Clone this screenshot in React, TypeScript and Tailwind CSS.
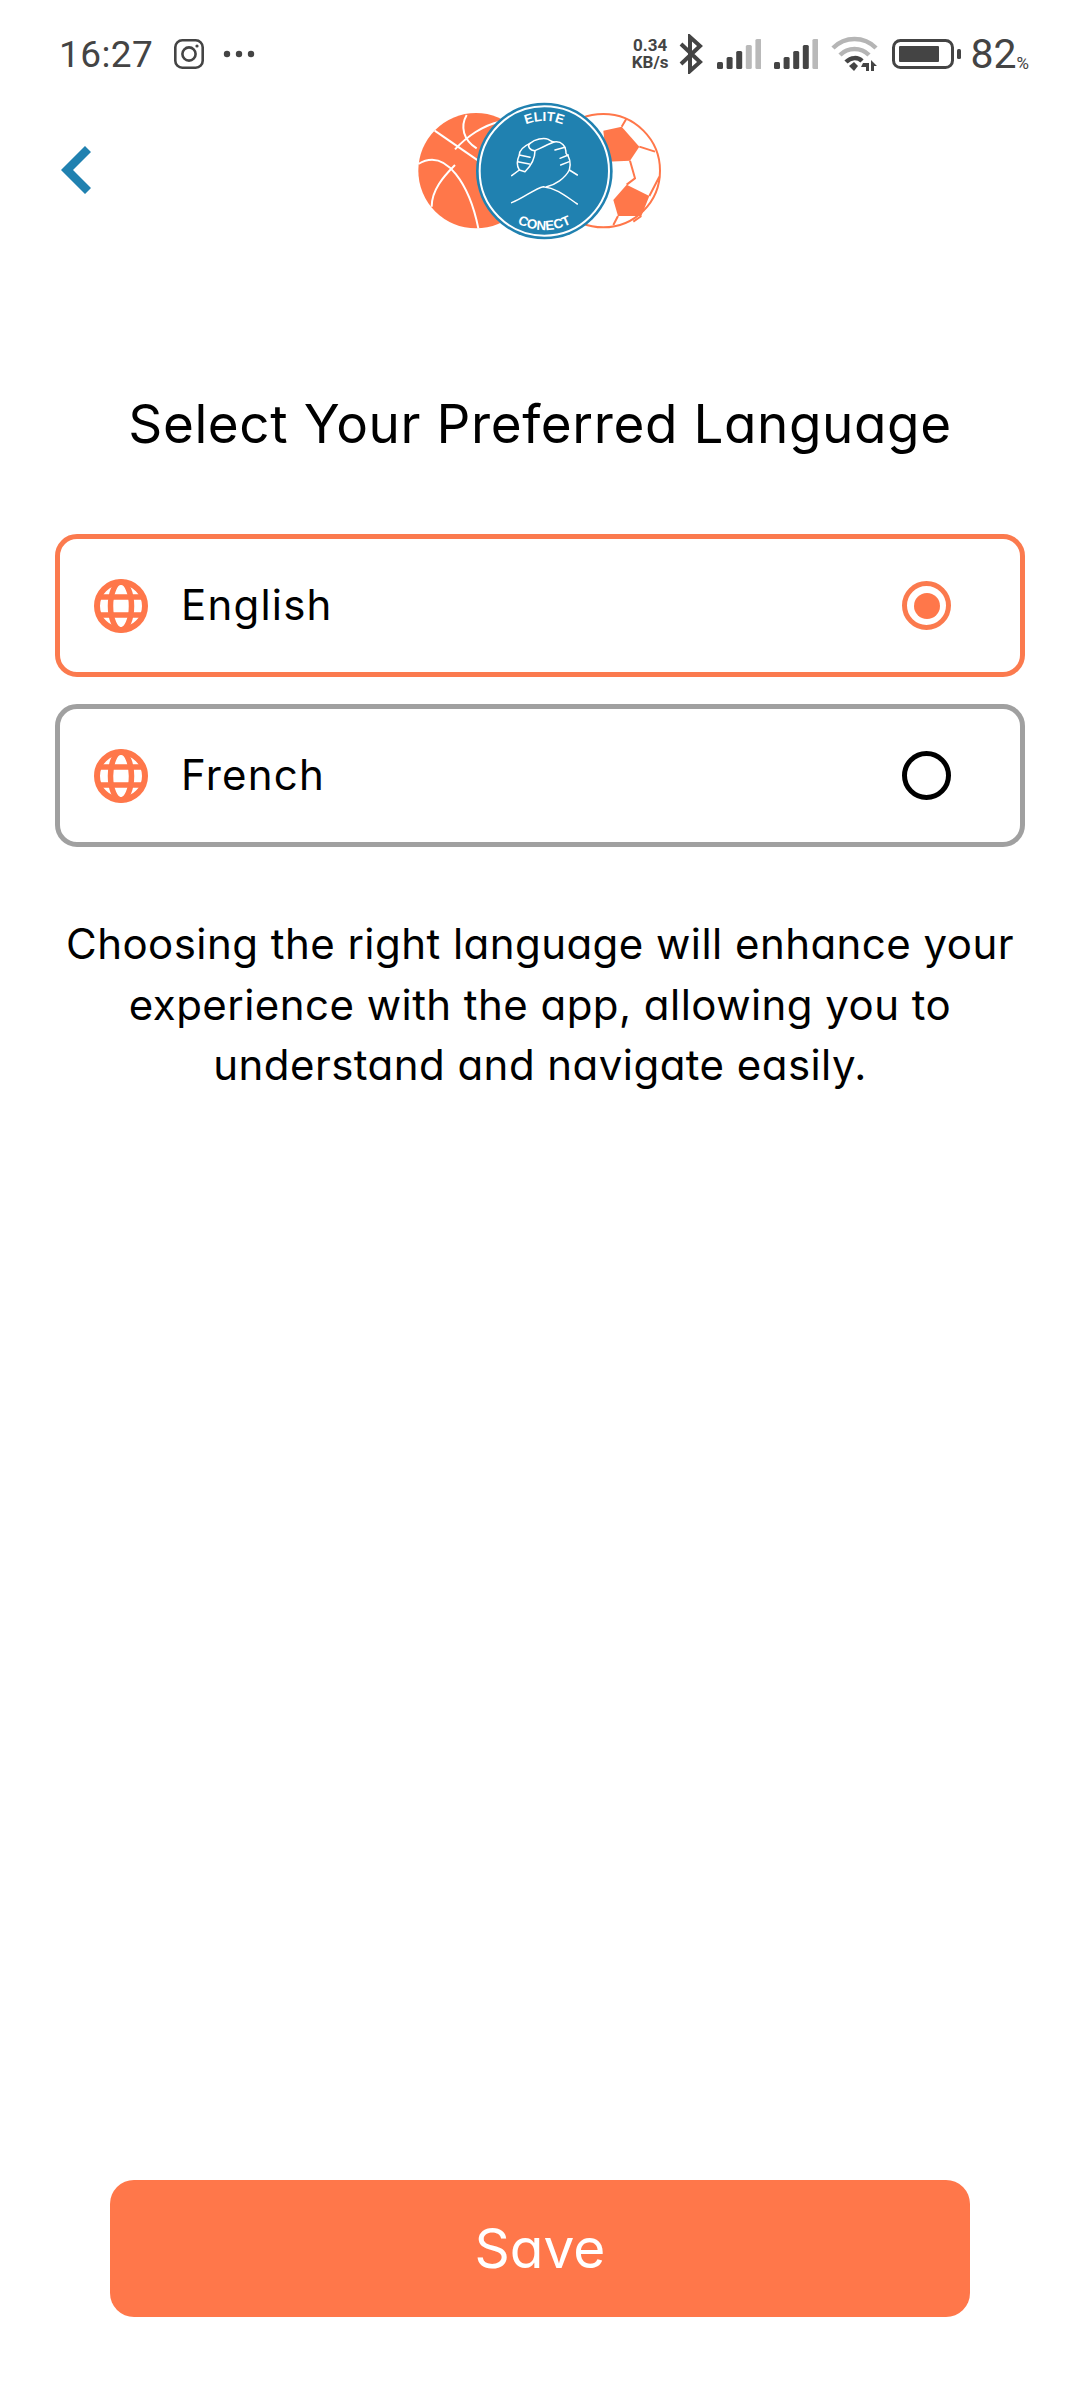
const ORANGE = "#ff774a";

// Fake system status bar icons
function StatusBar() {
  return (
    <div className="h-[90px] flex items-center pl-[59px] pr-[51px] pt-[18px] text-[#444444] font-['Roboto',sans-serif]">
      <span className="text-[37px] leading-none tracking-[0.4px]">16:27</span>
      <svg className="ml-[21px]" width="30" height="30" viewBox="0 0 30 30" fill="none" stroke="#444444" strokeWidth="2.6">
        <rect x="1.3" y="1.3" width="27.4" height="27.4" rx="7" />
        <circle cx="15" cy="15" r="6.6" />
        <circle cx="23" cy="7" r="1.6" fill="#444444" stroke="none" />
      </svg>
      <svg className="ml-[19px]" width="32" height="8" viewBox="0 0 32 8" fill="#444444">
        <circle cx="4" cy="4" r="3.2" />
        <circle cx="16" cy="4" r="3.2" />
        <circle cx="28" cy="4" r="3.2" />
      </svg>

      <div className="ml-auto flex items-center">
        <div className="flex flex-col items-center text-[17px] leading-[17px] font-bold">
          <span>0.34</span>
          <span>KB/s</span>
        </div>
        <svg className="ml-[10px]" width="26" height="40" viewBox="0 0 26 40" fill="none" stroke="#444444" strokeWidth="4">
          <path d="M3 10 L22 28 L12 37 V3 L22 12 L3 30" />
        </svg>
        <Signal bars={3} />
        <Signal bars={4} />
        <svg className="ml-[13px]" width="47" height="36" viewBox="0 0 47 36" fill="none">
          <path d="M2 12 C14 0 33 0 45 12" stroke="#b5b5b5" strokeWidth="4.5" />
          <path d="M9 19 C17 11 30 11 38 19" stroke="#b5b5b5" strokeWidth="4.5" />
          <path d="M15 26 C20 21 27 21 31 25" stroke="#444444" strokeWidth="4.5" />
          <path d="M18 30 L23 26 L27 30 L23 35 Z" fill="#444444" />
          <path d="M32 27 H38 V35 H35 V31 H30 Z M40 24 L46 30 H43 V35 H40 Z" fill="#444444" />
        </svg>
        <svg className="ml-[14px]" width="70" height="30" viewBox="0 0 70 30" fill="none">
          <rect x="1.5" y="1.5" width="59" height="27" rx="7" stroke="#444444" strokeWidth="3" />
          <rect x="7" y="7" width="40" height="16" rx="1" fill="#444444" />
          <rect x="65" y="10" width="4" height="10" rx="1.5" fill="#444444" />
        </svg>
        <span className="ml-[8px] text-[41px] leading-none">82</span>
        <span className="text-[17px] leading-none self-end mb-[3px]">%</span>
      </div>
    </div>
  );
}

function Signal({ bars }: { bars: number }) {
  return (
    <svg className="ml-[13px]" width="44" height="30" viewBox="0 0 44 30">
      {[0, 1, 2, 3, 4].map((i) => (
        <rect
          key={i}
          x={i * 9.6}
          y={[23, 18, 12, 6, 0][i]}
          width="6"
          height={[7, 12, 18, 24, 30][i]}
          rx="1.5"
          fill={i < bars ? "#444444" : "#b9b9b9"}
        />
      ))}
    </svg>
  );
}

function Logo() {
  return (
    <svg width="280" height="160" viewBox="0 0 840 480">
      {/* soccer ball */}
      <circle cx="610" cy="242" r="170" fill="#fff" stroke={ORANGE} strokeWidth="6" />
      <path d="M610 122 L665 110 L718 170 L690 212 L620 215 Z" fill={ORANGE} />
      <path d="M680 284 L748 318 L724 378 L654 378 L640 330 Z" fill={ORANGE} />
      <path d="M665 110 L680 85 M718 170 L765 185 M690 212 L705 265 L680 284 M748 318 L778 260 M654 378 L640 405 M724 378 L700 395" stroke={ORANGE} strokeWidth="6" fill="none" />

      {/* basketball */}
      <circle cx="228" cy="242" r="173" fill={ORANGE} />
      <g stroke="#fff" strokeWidth="6" fill="none">
        <path d="M104 122 L290 250" />
        <path d="M200 75 C180 110 190 150 230 175 M165 178 C200 140 250 105 300 95" />
        <path d="M55 222 C140 170 210 290 235 415" />
        <path d="M95 350 C95 300 130 260 165 225" />
      </g>

      {/* badge */}
      <circle cx="433" cy="243" r="205" fill="#2081b0" />
      <circle cx="433" cy="243" r="194" fill="none" stroke="#fff" strokeWidth="6" />
      <defs>
        <path id="logo-top" d="M283 243 A150 150 0 0 1 583 243" />
        <path id="logo-bottom" d="M256 243 A177 177 0 0 0 610 243" />
      </defs>
      <text fill="#fff" fontSize="40" fontWeight="600" fontFamily="'Liberation Sans', sans-serif" textAnchor="middle">
        <textPath href="#logo-top" startOffset="50%">ELITE</textPath>
      </text>
      <text fill="#fff" fontSize="40" fontWeight="600" fontFamily="'Liberation Sans', sans-serif" textAnchor="middle">
        <textPath href="#logo-bottom" startOffset="50%">CONECT</textPath>
      </text>

      {/* hands, traced from the badge */}
      <g transform="translate(240 90)" stroke="#fff" strokeWidth="4.5" fill="none" strokeLinecap="round" strokeLinejoin="round">
        <path d="M95 167 L118 150 C108 135 112 118 118 105 C118 92 128 80 150 70 C165 58 190 52 205 58 C212 62 215 65 222 66 C245 62 258 78 258 100 C272 115 272 135 268 150 C255 175 225 195 200 200" />
        <path d="M95 248 C130 235 165 205 190 200 C235 205 265 235 292 252" />
        <path d="M268 150 L292 165" />
        <path d="M150 70 C140 78 150 92 165 92 C180 85 200 75 222 66" />
        <path d="M165 92 C165 115 155 135 135 155 L118 150" />
        <path d="M118 105 L150 112 M113 125 L148 132" />
        <path d="M225 90 L255 82 M240 115 L265 105 M242 135 L268 125" />
      </g>
    </svg>
  );
}

function Globe() {
  return (
    <svg width="54" height="54" viewBox="0 0 54 54" fill="none" stroke={ORANGE} strokeWidth="5.5">
      <circle cx="27" cy="27" r="24" strokeWidth="6" />
      <ellipse cx="27" cy="27" rx="10.5" ry="24" />
      <path d="M4 18 H50 M4 36 H50" />
    </svg>
  );
}

function LanguageRow({ label, selected }: { label: string; selected: boolean }) {
  return (
    <div
      className={
        "h-[143px] flex items-center rounded-[22px] border-[5px] pl-[34px] pr-[69px] " +
        (selected ? "border-[#fb7a4e]" : "border-[#a0a0a0]")
      }
    >
      <Globe />
      <span className="ml-[33px] mb-[2px] text-[42px] leading-none tracking-[1.2px] text-black">{label}</span>
      {selected ? (
        <div className="ml-auto w-[49px] h-[49px] rounded-full border-[5px] border-[#fb7a4e] flex items-center justify-center">
          <div className="w-[26px] h-[26px] rounded-full bg-[#ff774a]" />
        </div>
      ) : (
        <div className="ml-auto w-[49px] h-[49px] rounded-full border-[5px] border-black" />
      )}
    </div>
  );
}

export default function App() {
  return (
    <div className="w-[1080px] h-[2400px] bg-white flex flex-col font-['Inter',sans-serif] [font-feature-settings:'cv11']">
      <StatusBar />

      <div className="h-[160px] grid grid-cols-[400px_280px_400px] items-center">
        <svg className="ml-[61px]" width="30" height="48" viewBox="0 0 30 48" fill="none" stroke="#2081b0" strokeWidth="8.5">
          <path d="M27 3 L6 24 L27 45" />
        </svg>
        <Logo />
      </div>

      <h1 className="mt-[144px] h-[60px] text-center text-[53px] leading-[60px] tracking-[0.6px] font-normal text-black">
        Select Your Preferred Language
      </h1>

      <div className="mt-[80px] mx-[55px] flex flex-col gap-[27px]">
        <LanguageRow label="English" selected />
        <LanguageRow label="French" selected={false} />
      </div>

      <p className="mt-[67px] text-center text-[42px] leading-[60.5px] tracking-[0.45px] text-black">
        Choosing the right language will enhance your
        <br />
        experience with the app, allowing you to
        <br />
        understand and navigate easily.
      </p>

      <button className="mt-auto mb-[83px] mx-[110px] h-[137px] rounded-[24px] bg-[#ff774a] text-white text-[55px]">
        Save
      </button>
    </div>
  );
}
